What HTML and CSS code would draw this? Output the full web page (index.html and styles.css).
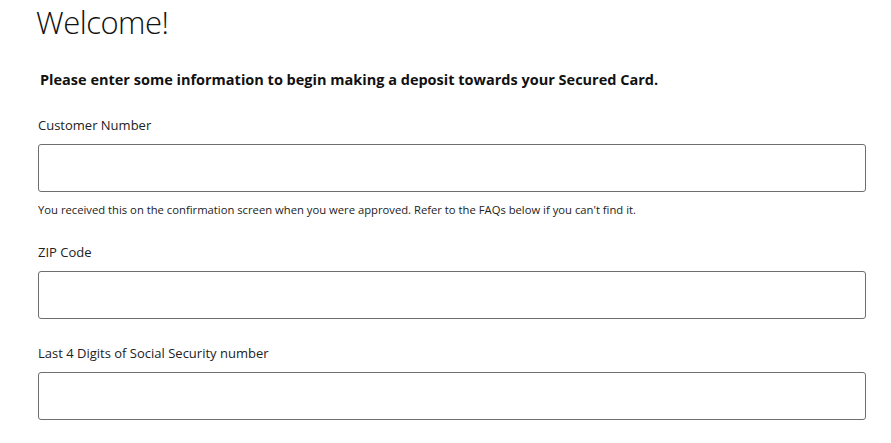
FILE: index.html
```html
<!DOCTYPE html>
<html lang="en">
<head>
<meta charset="utf-8">
<title>Welcome</title>
<link rel="stylesheet" href="styles.css">
</head>
<body>
<main class="page">
  <h1 class="title">Welcome!</h1>
  <p class="intro">Please enter some information to begin making a deposit towards your Secured Card.</p>
  <form class="form">
    <div class="field">
      <label class="label" for="cust">Customer Number</label>
      <input class="input" id="cust" type="text">
      <p class="help">You received this on the confirmation screen when you were approved. Refer to the FAQs below if you can't find it.</p>
    </div>
    <div class="field">
      <label class="label" for="zip">ZIP Code</label>
      <input class="input" id="zip" type="text">
    </div>
    <div class="field">
      <label class="label" for="ssn">Last 4 Digits of Social Security number</label>
      <input class="input" id="ssn" type="text">
    </div>
  </form>
</main>
</body>
</html>
```

FILE: styles.css
```css
* { box-sizing: border-box; }
html, body { margin: 0; padding: 0; background: #fff; }
body {
  font-family: "Open Sans", "Noto Sans", sans-serif;
  color: #1a1a1a;
}
.page {
  padding: 0 25px 0 38px;
}
.title {
  margin: 0;
  font-size: 31px;
  line-height: 44px;
  font-weight: 300;
  letter-spacing: -0.5px;
  margin-left: -2px;
  color: #111;
}
.intro {
  margin: 25px 0 0 2px;
  font-size: 14.5px;
  line-height: 22px;
  font-weight: 700;
  color: #111;
}
.form { margin-top: 24px; display: flex; flex-direction: column; }
.field { display: flex; flex-direction: column; margin-bottom: 24px; }
.label {
  font-size: 13px;
  line-height: 20px;
  margin-bottom: 9px;
  color: #222;
}
.input {
  height: 48px;
  width: 100%;
  border: 1px solid #6e6e6e;
  border-radius: 3px;
  background: #fff;
  font: inherit;
  padding: 0 12px;
}
.help {
  margin: 9px 0 0;
  font-size: 11.25px;
  line-height: 17px;
  color: #222;
}
```
